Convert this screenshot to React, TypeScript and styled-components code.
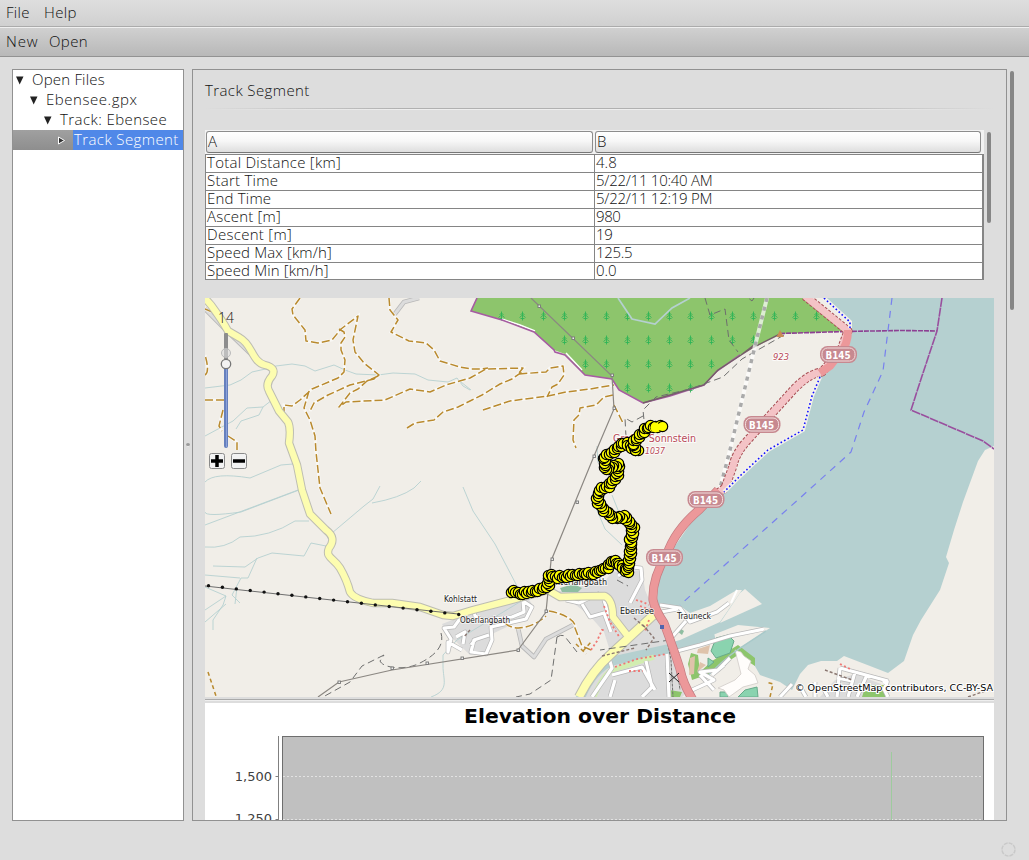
import React from "react";
import styled, { createGlobalStyle } from "styled-components";

const Global = createGlobalStyle`
  * { box-sizing: border-box; }
  html, body { margin: 0; padding: 0; background: #dddddd; overflow: hidden; }
  body { font: 300 15px "Open Sans", "Noto Sans", sans-serif; color: #111; }
`;

const Window = styled.div`
  width: 1029px;
  height: 860px;
  display: flex;
  flex-direction: column;
  background: #dddddd;
`;
const MenuBar = styled.div`
  height: 27px;
  display: flex;
  padding-left: 6px;
  line-height: 25px;
  background: linear-gradient(#dedede, #d0d0d0);
  border-bottom: 1px solid #ababab;
`;
const ToolBar = styled(MenuBar)`
  height: 30px;
  line-height: 27px;
  background: linear-gradient(#d0d0d0, #b8b8b8);
  border-top: 1px solid #efefef;
  border-bottom: 1px solid #929292;
`;
const Label = styled.span<{ $w?: number; $ls?: number }>`
  display: block;
  flex: none;
  width: ${(p) => (p.$w ? `${p.$w}px` : "auto")};
  letter-spacing: ${(p) => p.$ls ?? 0}px;
  white-space: pre;
`;
const Body = styled.div`
  flex: 1;
  display: flex;
  padding: 12px 15px 0 12px;
`;
const Tree = styled.div`
  width: 172px;
  height: 752px;
  background: #fff;
  border: 1px solid #919191;
`;
const TreeRow = styled.div<{ $selected?: boolean }>`
  height: 20px;
  line-height: 19px;
  display: flex;
  color: ${(p) => (p.$selected ? "#fff" : "#111")};
  background: ${(p) => (p.$selected ? "linear-gradient(#a0a0a0, #8e8e8e)" : "none")};
`;
const Toggle = styled.div<{ $depth: number }>`
  width: ${(p) => p.$depth * 14 + 18}px;
  flex: none;
  display: flex;
  justify-content: flex-end;
  align-items: center;
  padding-right: 6px;
`;
const NodeText = styled.div<{ $selected?: boolean; $ls: number }>`
  flex: 1;
  padding-left: 1px;
  letter-spacing: ${(p) => p.$ls}px;
  white-space: nowrap;
  background: ${(p) => (p.$selected ? "#5088e8" : "none")};
`;
const Divider = styled.div`
  width: 8px;
  height: 752px;
  display: flex;
  align-items: center;
  justify-content: center;
`;
const Grip = styled.i`
  width: 4px;
  height: 4px;
  border-radius: 50%;
  background: #9a9a9a;
  border-bottom: 1px solid #eee;
`;
const Detail = styled.div`
  width: 815px;
  height: 752px;
  border: 1px solid #919191;
  padding: 0 12px;
  overflow: hidden;
`;
const Heading = styled.div`
  height: 40px;
  padding-top: 10px;
  line-height: 20px;
  background:
    linear-gradient(90deg, #ddd, #b0b0b0 25%, #b0b0b0 75%, #ddd) 0 38px / 100% 1px no-repeat,
    linear-gradient(90deg, #ddd, #eee 25%, #eee 75%, #ddd) 0 39px / 100% 1px no-repeat;
`;
const TableArea = styled.div`
  height: 150px;
  margin-top: 20px;
  display: flex;
  gap: 3px;
`;
const Table = styled.div`
  width: 779px;
`;
const HeaderRow = styled.div`
  height: 24px;
  display: grid;
  grid-template-columns: 388px 387px;
  gap: 1px;
  padding: 1px 2px 1px 1px;
  background: #f2f2f2;
`;
const HeaderCell = styled.div`
  height: 22px;
  margin-right: 1px;
  padding-left: 1px;
  line-height: 19px;
  border: 1px solid #8d8d8d;
  border-bottom-color: #777;
  border-radius: 3px;
  background: linear-gradient(#fff, #f7f7f7 45%, #dedede);
`;
const Rows = styled.div`
  height: 126px;
  overflow: hidden;
  border: 1px solid #858585;
  border-right-width: 2px;
`;
const Row = styled.div`
  height: 18px;
  display: grid;
  grid-template-columns: 389px 1fr;
  line-height: 15px;
  background: #fff;
  border-bottom: 1px solid #858585;
`;
const Cell = styled.div<{ $ls: number }>`
  padding-left: 1px;
  letter-spacing: ${(p) => p.$ls}px;
  white-space: nowrap;
  &:first-child { border-right: 1px solid #858585; }
`;
const Thumb = styled.div<{ $h: number }>`
  width: 4px;
  height: ${(p) => p.$h}px;
  margin-top: 2px;
  border-radius: 2px;
  background: #868686;
`;
const MapView = styled.svg`
  display: block;
  margin-top: 18px;
  font-weight: 400;
`;
const Rule = styled.div`
  height: 6px;
  padding-top: 2px;
  &::after {
    content: "";
    display: block;
    height: 2px;
    background: linear-gradient(#aaa 50%, #eee 50%);
  }
`;
const Chart = styled.svg`
  display: block;
  font-weight: 400;
`;
const OuterBar = styled.div`
  margin-left: 3px;
`;
const Status = styled.div`
  height: 21px;
  display: flex;
  justify-content: flex-end;
  padding: 2px 12px 0 0;
`;

const tree = [
  { text: "Open Files", ls: 0.2 },
  { text: "Ebensee.gpx", ls: 0.55 },
  { text: "Track: Ebensee", ls: 0.42 },
  { text: "Track Segment", ls: 0.4 },
];

const stats: [string, string, number, number][] = [
  ["Total Distance [km]", "4.8", 0.26, 0],
  ["Start Time", "5/22/11 10:40 AM", 0.26, -0.26],
  ["End Time", "5/22/11 12:19 PM", 0.2, -0.26],
  ["Ascent [m]", "980", 0.2, -0.4],
  ["Descent [m]", "19", 0.3, -0.2],
  ["Speed Max [km/h]", "125.5", 0.13, -0.3],
  ["Speed Min [km/h]", "0.0", 0.13, -0.1],
];

const track: [number, number][] = [
  [511, 591], [522, 593], [537, 590], [548, 585], [548, 574], [557, 577], [577, 574], [593, 573],
  [607, 567], [613, 560], [620, 564], [627, 572], [630, 553], [630, 542], [633, 528], [624, 516],
  [615, 518], [605, 512], [597, 500], [599, 489], [608, 486], [617, 475], [618, 464], [605, 469],
  [604, 456], [613, 451], [624, 442], [637, 451], [632, 443], [643, 431], [648, 426], [662, 426],
];

function samples(points: [number, number][], step: number) {
  const out: [number, number][] = [];
  points.slice(1).forEach(([x, y], i) => {
    const [px, py] = points[i];
    const length = Math.hypot(x - px, y - py);
    const n = Math.max(1, Math.round(length / step));
    const nx = (py - y) / length;
    const ny = (x - px) / length;
    for (let k = 0; k < n; k++) {
      const wobble = [1, -1.2, 0.6, -0.5][k % 4];
      out.push([px + ((x - px) * k) / n + nx * wobble, py + ((y - py) * k) / n + ny * wobble]);
    }
  });
  out.push(points[points.length - 1]);
  return out;
}

const forestRows: [number, number[]][] = [
  [315, [501, 522, 543, 564, 585, 606, 627, 648, 669, 690, 711, 732, 753, 774, 795, 816]],
  [339, [564, 585, 606, 627, 648, 669, 690, 711, 732, 753]],
  [363, [585, 606, 627, 648, 669, 690, 711]],
  [387, [627, 648, 669, 690]],
];

const footpaths = [
  "M300 298L292 309 293 315 305 330 306 341 318 343 332 340 341 329 358 316 353 340 355 352 364 363 379 375 374 379 350 385 328 395 314 403 310 411",
  "M339 329L344 332 345 337 341 343 341 350 345 360 344 372 338 378 312 389 300 400 292 406 284 405V414M309 391L304 408 310 420 315 436 316 452 318 470 320 488 331 514",
  "M378 376L367 381 358 389 350 393 339 407 346 402 385 400 410 389 430 392 446 385 470 378 486 369 523 368 518 374 546 372 550 368 563 366 564 375 558 384 552 387 547 397",
  "M389 298L390 310 398 320 391 332 409 341 426 343 434 350 440 361 460 367 471 369 480 369 488 368",
  "M407 428L415 423 434 420 443 412 458 407 472 400 482 395 500 384 512 379 522 372M483 410L510 401 548 396 566 392 590 389 614 385M613 395L604 397 596 405 580 408 579 415 574 420 573 440 576 448",
  "M205 400H224M223 410L219 426 222 431M228 436L237 442 237 450M205 375Q210 372 205 355M205 309L217 314M614 405L623 423M505 623C514 632 533 628 546 616M549 611C566 614 577 622 575 628L582 646 591 650",
];

const streams = [
  "M205 388L230 385 241 380 252 372 270 368 276 366 292 364 305 366 315 371 334 365 345 370 356 374 378 375 393 373 415 374 428 380 448 382 457 378 463 386 470 390",
  "M205 436L233 421 247 408 263 407 272 400M236 429L241 421 259 415 263 407M205 482Q214 472 250 478L281 465 293 464",
  "M205 512Q205 517 241 512L299 490M205 525L298 490M205 547Q225 549 240 537 270 537 295 521L309 521",
  "M213 566L245 567 258 558 272 553 304 556 311 543 326 546M257 558L248 578 241 578 232 595 240 603M205 575L240 578M205 587L226 596 223 605 213 620 213 630M205 610L226 596M205 622L226 604M237 587L235 604",
  "M332 533L364 506 373 499 380 486M372 503Q400 498 414 488L421 481M431 697C450 690 443 680 443 666V655L457 640 490 620 523 600",
  "M463 487L473 511 495 544 517 586M597 446L598 463M595 495L597 510 605 529 622 545M612 495L620 515M461 382L471 390",
];

const towns = "M442 624L468 614 526 596 532 604 526 618 492 634 488 652 470 655 446 632Z";
const ebensee = "M556 592L605 581 612 572 642 570 645 590 651 604 675 640 690 690 682 697H580L610 651 604 632 590 616 572 602Z";
const streetPaths = [
  "M462 616L454 627 444 628 451 639 448 652 448 642 462 650M456 637L465 632 463 644M473 607L475 616 482 620 512 617 524 612 523 601 532 607 526 619 491 627 492 640 486 654 471 652 474 640 489 635M471 645L475 640",
  "M566 600L579 603 600 593M582 604L590 617 604 613 611 632M604 600L609 616 618 628M630 603L642 580 641 568 632 567 618 576",
  "M608 655L612 668 592 697M612 675L642 667 655 690M615 680L610 697M646 661L652 687 642 697M667 654L669 697M677 651L700 645 730 636 764 629M660 605L680 608 690 622 717 612 729 603M672 637L686 621M661 612L678 609",
  "M692 690L714 680 700 672 718 670 730 658M700 675L714 690M712 675L724 665",
  "M780 697L792 684M802 690L806 697M815 682V697M840 668L837 697M840 668L888 681M837 678L852 681M855 672L848 697M867 675L857 697M850 686L840 690M828 697L822 686M883 683Q891 677 884 689L888 697",
];

const badges: [number, number][] = [[838.5, 354.5], [762, 424.5], [706, 499.5], [664.5, 557.5]];

const Conifer: React.FC<{ x: number; y: number }> = ({ x, y }) => (
  <path d={`M${x} ${y - 4}V${y + 5}M${x - 2} ${y - 0.5}L${x} ${y - 2.5} ${x + 2} ${y - 0.5}M${x - 3} ${y + 2}L${x} ${y - 0.5} ${x + 3} ${y + 2}M${x - 2} ${y + 3}H${x + 2}`} />
);

const halo = { paintOrder: "stroke" as const };

const OsmMap = () => (
  <MapView width="789" height="399" viewBox="205 298 789 399" fontFamily="'DejaVu Sans', sans-serif">
    <rect x="205" y="298" width="789" height="399" fill="#f1eee8" />
    <path fill="#b5d0d0" d="M823 298L838 311 851 323 849 342 820 373 811 395 803 430 768 450 755 462 744 475 722 493 693 520 668 556 658 580 657 606 674 608 680 606 690 613 710 606 730 594 737 590 742 590 720 622 680 640 600 662 577 697H580L592 676 614 661 680 648 738 625 770 628 737 650 752 661 760 675 780 682 792 690 800 674 808 665 821 661 837 661 844 656 870 666 888 673 904 661 913 635 921 620 940 590 949 563 946 557 954 530 963 502 978 461 985 450 994 446V298Z" />
    <path fill="#8dc56c" d="M477 298L471 311 502 320 534 332 554 350 565 354 585 375 612 379 619 390 643 403 670 396 704 385 717 371 740 355 780 334 848 331 805 298Z" />
    <g stroke="#2fb457" strokeWidth=".9" fill="none">
      {forestRows.flatMap(([y, xs]) => xs.map((x) => <Conifer key={`${x}-${y}`} x={x + 0.5} y={y + 0.5} />))}
    </g>
    <path d="M502 319L520 325 535 331M566 353L582 370" stroke="#fff" strokeWidth="1.5" fill="none" />
    <path d="M618 298L632 319 655 324 672 308 690 298" stroke="#b5d0d0" strokeWidth="1.7" fill="none" />
    <g stroke="#a65ba2" strokeWidth="1.6" fill="none">
      <path d="M477 298L471 311 502 320 534 332 554 350 555 352 565 355 585 375 612 379 619 390 643 403 670 396 704 385 717 371 740 355" />
      <path d="M780 333.500L845 331.500 900 330.500 937 331" stroke="#8d4093" strokeDasharray="5 1" />
      <path d="M942 298L937 331 922 376 911 410 983 441 994 449" stroke="#994f9e" strokeDasharray="9 .8" />
    </g>
    <path d="M643 403L704 385 718 370 752 348 780 334M741 355L754 345" stroke="#755e69" strokeWidth="1.4" fill="none" />
    <path fill="#dcdcdc" d={towns} />
    <path fill="#dcdcdc" d={ebensee} />
    <path fill="#dcdcdc" d="M855 674L881 684 884 697H820L835 680ZM608 665L654 660 662 697H590Z" />
    <path fill="none" stroke="#b5d0d0" strokeWidth="9" d="M580 699Q592 670 612 661L672 648 715 637" />
    <path fill="none" stroke="#d2edb1" strokeWidth="5" d="M594 697Q602 676 612 670L654 657" />
    <path fill="#8dc56c" d="M691 653L698 655 700 672 712 661 738 645 755 658V666L738 655 709 674 692 680 688 664ZM866 685H885V697H862ZM669 690L682 692 680 697H668Z" />
    <path fill="#8ad3af" stroke="#68aa8b" d="M711 651L716 638 728 635 734 641 730 653 716 658ZM745 690L757 687 758 697H738ZM708 658L714 662 708 667ZM720 692H728V697H720Z" />
    <path fill="#8fbea1" d="M560 588L574 584 582 588 578 592 562 592ZM678 627L684 631 682 635 677 631Z" />
    <path fill="#dfc3ab" d="M698 649L710 645 708 654 697 653ZM690 658L695 656 694 674 689 675ZM700 662L706 665 697 672Z" />
    <path fill="#fffdfb" stroke="#d0ccc8" strokeWidth=".8" d="M735 650L741 652 744 656 751 661 748 669 755 675 758 683 743 687 729 697 724 690 718 688 735 680 741 674Z" />
    <g stroke="#b5d0d0" strokeWidth=".9" fill="none">
      {streams.map((d) => <path key={d} d={d} />)}
    </g>
    <path fill="none" stroke="#a8c9ca" strokeWidth="1.5" d="M705 679Q720 662 740 648L766 631" />
    <g fill="none" stroke="#b8b8b8" strokeWidth="4.600" strokeLinejoin="round">
      <path d="M205 309L226 330 252 355M518 628L522 646 534 657 546 639 573 625M394 315L404 302 419 298" />
      {streetPaths.map((d) => <path key={d} d={d} />)}
    </g>
    <g fill="none" strokeLinejoin="round">
      <path stroke="#dcdcdc" strokeWidth="3" d="M205 309L226 330 252 355M518 628L522 646 534 657 546 639 573 625M394 315L404 302 419 298" />
      {streetPaths.map((d) => <path key={d} d={d} stroke="#fff" strokeWidth="3.2" />)}
    </g>
    <g fill="none" stroke="#fff" strokeWidth="3" opacity=".6">
      {footpaths.map((d) => <path key={d} d={d} />)}
    </g>
    <g fill="none" stroke="#b98a2e" strokeWidth="1.5" strokeDasharray="8 3" strokeLinejoin="round">
      {footpaths.map((d) => <path key={d} d={d} />)}
      <path d="M208 672L216 696M770 697L773 684 766 682M576 644L586 654M583 651L591 642" strokeDasharray="4 3" />
    </g>
    {[["#bdbdb2", 8.4], ["#fdfdb0", 6.4]].map(([c, w]) => (
      <g key={c} stroke={c} strokeWidth={w} fill="none" strokeLinejoin="round">
        <path d="M203 296L211 305Q222 320 228 331L240 338C252 344 252 362 265 365Q277 368 272 376 265 384 269 391L279 411 288 422Q291 428 289 443L297 465 302 490 310 514 326 530Q337 538 329 548C325 558 334 558 340 568Q347 580 350 592 354 599 373 603L392 603 420 607 443 615 453 616 473 610 523 597 548 590 560 597Q590 596 605 596 613 600 613 617L627 635" />
        <path d="M660 609L610 655Q592 671 579 697" strokeWidth={Number(w) + 1.5} />
      </g>
    ))}
    <g fill="none" stroke="#6e6e6e" strokeWidth="1">
      <path d="M205 586L458 614" />
      <path strokeDasharray="7 4" d="M441 633Q446 650 420 663C405 671 383 668 380 661L384 655M384 655L362 666 350 682 323 697M557 637L551 680 530 694 516 697M557 637Q563 633 566 638L577 652M670 640L600 650M754 298L752 301 747 297M705 298L710 315 725 309 729 340 738 352M784 335L742 359 723 377 690 389 656 397 643 410 644 420M643 416L632 422 625 418 626 437M617 580L628 586" />
      <path strokeDasharray="3 1" d="M667 640L671 660 673 697M675 650L680 690" />
    </g>
    <g fill="#111">
      {Array.from({ length: 19 }, (_, i) => <circle key={i} cx={208.5 + i * 13.9} cy={585.7 + i * 1.6} r="1.7" />)}
    </g>
    <path d="M531 298L612 376 614 409 594 456 551 561 546 612 518 650 392 670 339 682 318 697" stroke="#8b8782" strokeWidth="1.2" fill="none" />
    <g fill="#eee" stroke="#777" strokeWidth=".9">
      {[[539, 306], [573, 338], [612, 375], [614, 408], [594, 456], [577, 502], [552, 559], [546, 611], [518, 650], [462, 658], [427, 663], [392, 668], [339, 682]].map(([x, y]) => <rect key={x + "-" + y} x={x - 1} y={y - 1} width="2.500" height="2.500" />)}
    </g>
    <path d="M767 298L755 346 742 400 730 450 720 488 706 500" fill="none" stroke="#fff" strokeWidth="4" opacity=".7" />
    <path d="M767 298L755 346 742 400 730 450 720 488 706 500" fill="none" stroke="#aaa" strokeWidth="3.500" strokeDasharray="4 5" />
    <g fill="none" strokeLinejoin="round">
      <path d="M805 296L848 331 841 350 822 372Q810 373 795 388L745 443Q735 455 733 466L725 488 707 501" stroke="#a95056" strokeWidth="9" strokeDasharray="3 1.5" />
      <path d="M805 296L848 331 841 350 822 372Q810 373 795 388L745 443Q735 455 733 466L725 488 707 501" stroke="#f4c3c6" strokeWidth="7" />
      <path d="M848 330Q848 345 840 353L830 366 820 373" stroke="#ec989a" strokeWidth="8" />
      <path d="M718 490L700 509Q675 530 667 554 652 578 653 600 655 610 664 623 674 650 680 669 683 684 693 700" stroke="#c47c81" strokeWidth="9" />
      <path d="M718 490L700 509Q675 530 667 554 652 578 653 600 655 610 664 623 674 650 680 669 683 684 693 700" stroke="#ec989a" strokeWidth="7.6" />
    </g>
    <g fill="none" stroke="#f4f1ec" strokeWidth="4"><path d="M824 298L838 311 850 322 850 328M820 377L812 396 803 430 768 450 755 462 740 476 724 492" /></g>
    <path d="M824 298L838 311 850 322 850 328M820 377L812 396 803 430 768 450 755 462 740 476 724 492" fill="none" stroke="#1111ff" strokeWidth="1.6" strokeDasharray="1.6 2.4" />
    <path d="M892 298L883 371 864 412 851 452 800 498 680 605" fill="none" stroke="#7880ee" strokeWidth="1.2" strokeDasharray="7 6" />
    <path d="M720 623L740 593 745 589 762 604Z" fill="#f1eee8" /><path d="M737 590L731 603" stroke="#fff" strokeWidth="2" />
    <path d="M776.500 337L780 330 784 337Z" fill="#c98b53" />
    <path d="M669 673L679 682M679 673L669 682" stroke="#222" />
    <rect x="660" y="625" width="4" height="4" fill="#5165ad" />
    <g fill="none" stroke="#f07774" strokeWidth="1.8" strokeDasharray="2 2.5">
      <path d="M591 650L597 641 602 630 606 630M636 600L643 602 649 605M640 606L651 610M615 667L637 659 667 654M629 671L643 671M604 606L610 622 620 638M649 620L645 631M840 664L850 669" />
    </g>
    <path fill="none" stroke="#8a7771" strokeDasharray="3 2" strokeWidth="1.4" d="M643 625L654 638 646 650M634 618L647 629M602 656L635 648M470 630L464 637M825 670L852 680M968 697L988 690" />

    <g fontSize="8" fill="#222" stroke="#fff" strokeWidth="2" strokeOpacity=".6" style={halo}>
      <text x="444" y="602" textLength="33" lengthAdjust="spacingAndGlyphs">Kohlstatt</text>
      <text x="460" y="622.500" textLength="50" lengthAdjust="spacingAndGlyphs">Oberlangbath</text>
      <text x="549" y="584.500" textLength="58" lengthAdjust="spacingAndGlyphs">Unterlangbath</text>
      <text x="620" y="614" textLength="34" lengthAdjust="spacingAndGlyphs">Ebensee</text>
      <text x="677" y="619" textLength="34" lengthAdjust="spacingAndGlyphs">Trauneck</text>
    </g>
    <g fontSize="10" fill="#b94857" stroke="#fff" strokeWidth="2" strokeOpacity=".8" style={halo}>
      <text x="613" y="442" textLength="83" lengthAdjust="spacingAndGlyphs">Großer Sonnstein</text>
      <text x="645" y="454" fontSize="9" fontStyle="italic" textLength="20" lengthAdjust="spacingAndGlyphs">1037</text>
      <text x="773" y="360" fontSize="9" fontStyle="italic" textLength="16" lengthAdjust="spacingAndGlyphs">923</text>
    </g>
    {badges.map(([x, y]) => (
      <g key={x}>
        <rect x={x - 18.5} y={y - 8.5} width="37" height="17" rx="7.500" fill="#c78990" />
        <rect x={x - 16.5} y={y - 6.5} width="33" height="13" rx="5.500" fill="#c78990" stroke="#f2dddd" />
        <text x={x - 13} y={y + 4} textLength="25" lengthAdjust="spacingAndGlyphs" fontWeight="700" fontSize="10.500" fill="#fff">B145</text>
      </g>
    ))}
    <g fill="#ffff00" stroke="#000" strokeWidth="1.2">
      {samples(track, 2.3).map(([x, y], i) => <circle key={i} cx={Math.round(x) + 0.5} cy={Math.round(y) + 0.5} r="5.200" />)}
      <circle cx="655.500" cy="427.500" r="5" stroke="none" />
    </g>
    <text x="795" y="691" textLength="198" lengthAdjust="spacingAndGlyphs" fontSize="9" fill="#000" stroke="#fff" strokeWidth="2" style={halo}>© OpenStreetMap contributors, CC-BY-SA</text>

    <text x="218" y="323" fontSize="14" fontWeight="300" textLength="16" fontFamily="'Open Sans', sans-serif" fill="#111">14</text>
    <rect x="224" y="333" width="4" height="28" rx="1" fill="#8d8d8d" />
    <rect x="224" y="366" width="4" height="82" rx="2" fill="#6680bd" />
    <path d="M226.500 367V447" stroke="#8ca2da" />
    <circle cx="226" cy="353" r="4.500" fill="#ddd" fillOpacity=".6" stroke="#bbb" />
    <circle cx="226" cy="364" r="4.700" fill="#f3f3f3" stroke="#777" strokeWidth="1.3" />
    {[209.5, 231.5].map((x, i) => (
      <g key={x}>
        <rect x={x} y="453.500" width="15" height="15" rx="2" fill="#f2f2f2" stroke="#8a8a8a" />
        <path d={`M${x + 1.5} 461H${x + 13.5}${i ? "" : `M${x + 7.5} 455V467`}`} stroke="#000" strokeWidth="3.500" />
      </g>
    ))}
  </MapView>
);

const ElevationChart = () => (
  <Chart width="789" height="118" viewBox="205 703 789 118" fontFamily="'DejaVu Sans', sans-serif">
    <rect x="205" y="703" width="789" height="118" fill="#fff" />
    <text x="464" y="723" fontSize="20" fontWeight="700" textLength="272" lengthAdjust="spacingAndGlyphs">Elevation over Distance</text>
    <rect x="282.500" y="736.500" width="701" height="100" fill="#c0c0c0" stroke="#6e6e6e" />
    <path d="M278.500 736V821M275.500 776.500H278M275.500 819.500H278" stroke="#808080" />
    <path d="M283 776.500H983M283 819.500H983" stroke="#e2e2e2" strokeDasharray="2 2" />
    <path d="M891.500 752V821" stroke="#9ecb9e" />
    <g fontSize="13" fill="#404040" textAnchor="end">
      <text x="272" y="781">1,500</text>
      <text x="272" y="823">1,250</text>
    </g>
  </Chart>
);

export default function App() {
  return (
    <Window>
      <Global />
      <MenuBar><Label $w={38} $ls={0.3}>File</Label><Label $ls={0.4}>Help</Label></MenuBar>
      <ToolBar><Label $w={43} $ls={0.9}>New</Label><Label $ls={0.4}>Open</Label></ToolBar>
      <Body>
        <Tree>
          {tree.map((n, i) => (
            <TreeRow key={n.text} $selected={i === 3}>
              <Toggle $depth={i}>
                {i === 3 ? (
                  <svg width="10" height="9" viewBox="0 0 10 9"><path d="M1.500 1L7.500 4.500 1.500 8Z" fill="#333" stroke="#fff" /></svg>
                ) : (
                  <svg width="9" height="9" viewBox="0 0 9 9"><path d="M0 .5H7.500L3.700 8.500Z" fill="#222" /></svg>
                )}
              </Toggle>
              <NodeText $selected={i === 3} $ls={n.ls}>{n.text}</NodeText>
            </TreeRow>
          ))}
        </Tree>
        <Divider><Grip /></Divider>
        <Detail>
          <Heading><Label $ls={0.4}>Track Segment</Label></Heading>
          <TableArea>
            <Table>
              <HeaderRow><HeaderCell>A</HeaderCell><HeaderCell>B</HeaderCell></HeaderRow>
              <Rows>
                {stats.map(([k, v, a, b]) => (
                  <Row key={k}><Cell $ls={a}>{k}</Cell><Cell $ls={b}>{v}</Cell></Row>
                ))}
              </Rows>
            </Table>
            <Thumb $h={91} />
          </TableArea>
          <OsmMap />
          <Rule />
          <ElevationChart />
        </Detail>
        <OuterBar><Thumb $h={239} /></OuterBar>
      </Body>
      <Status>
        <svg width="17" height="17" viewBox="0 0 17 17"><circle cx="8.500" cy="8.500" r="6.500" fill="none" stroke="#c9c9c9" strokeWidth="1.500" strokeDasharray="4 1" /></svg>
      </Status>
    </Window>
  );
}
